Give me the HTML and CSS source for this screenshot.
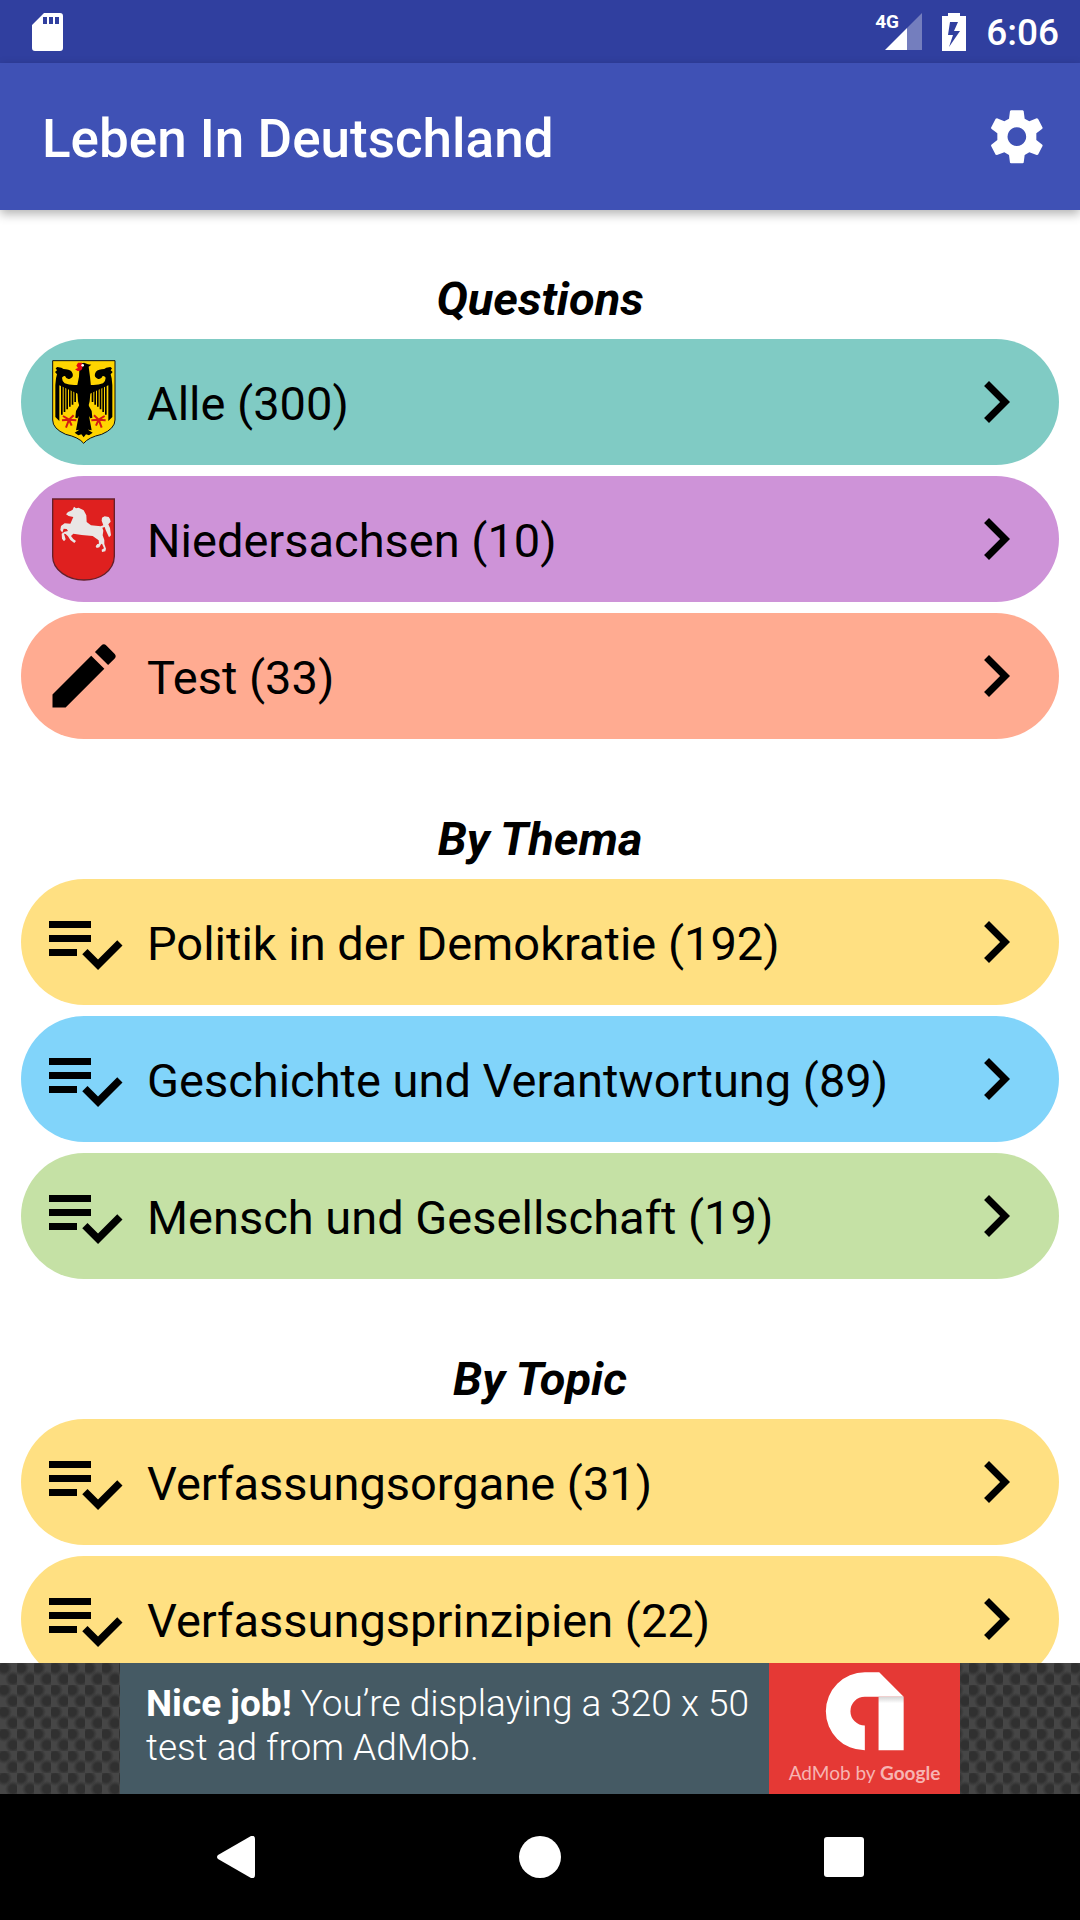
FILE: index.html
```html
<!DOCTYPE html>
<html lang="de">
<head>
<meta charset="utf-8">
<meta name="viewport" content="width=device-width, initial-scale=1">
<title>Leben In Deutschland</title>
<link rel="stylesheet" href="styles.css">
</head>
<body>
<svg class="sprite" aria-hidden="true">
  <symbol id="chevron" viewBox="0 0 24 24"><path d="M10 6 8.59 7.41 13.17 12l-4.58 4.59L10 18l6-6z"/></symbol>
  <symbol id="checklist" viewBox="0 0 24 24"><path d="M14 10H2v2h12v-2zm0-4H2v2h12V6zM2 16h8v-2H2v2zm19.5-4.5L23 13l-6.99 7-4.51-4.5L13 14l3.01 3 5.49-5.5z"/></symbol>
  <symbol id="pencil" viewBox="0 0 24 24"><path d="M3 17.25V21h3.75L17.81 9.94l-3.75-3.75L3 17.25zM20.71 7.04a1 1 0 0 0 0-1.41l-2.34-2.34a1 1 0 0 0-1.41 0l-1.83 1.83 3.75 3.75 1.83-1.83z"/></symbol>
</svg>
<div class="app">
  <div class="status">
    <svg class="status-sd" viewBox="0 0 31 38" role="img" aria-label="SD card"><path fill="#fff" fill-rule="evenodd" d="M12 0h16a3 3 0 0 1 3 3v32a3 3 0 0 1-3 3H3a3 3 0 0 1-3-3V12zM11 4v7h4V4zm6 0v7h4V4zm6 0v7h4V4z"/></svg>
    <div class="signal">
      <span class="signal-type">4G</span>
      <svg class="signal-bars" viewBox="0 0 37 37" aria-hidden="true"><path fill="#fff" fill-opacity=".33" d="M22 15 37 0v37H22z"/><path fill="#fff" d="M22 15v22H0z"/></svg>
    </div>
    <svg class="status-battery" viewBox="0 0 24 38" role="img" aria-label="Charging"><path fill="#fff" fill-rule="evenodd" d="M6 0h12v3h6v35H0V3h6zM8 9 6 22h5L7 34l11-16h-6l4-9z"/></svg>
    <span class="clock">6:06</span>
  </div>
  <header class="toolbar">
    <h1 class="toolbar-title">Leben In Deutschland</h1>
    <button class="settings" type="button" aria-label="Settings">
      <svg viewBox="434 311 189 189"><path fill="#fff" fill-rule="evenodd" d="M512 327h35l3 2 3 23 14 8 22-9 4 1 14 27-1 3-18 14v20l18 14 1 3-14 27-4 1-22-8-14 8-3 23-3 2h-35l-3-2-3-23-14-8-22 8-4-1-14-27 1-3 18-14v-20l-18-14-1-3 14-27 4-1 22 9 14-8 3-23zM529.500 378a28 28 0 1 0 .1 0z"/></svg>
    </button>
  </header>
  <main class="content">
    <section class="group">
      <h2 class="group-title">Questions</h2>
      <a class="row teal" href="#alle">
        <svg class="row-icon" viewBox="6 30 252 252" aria-hidden="true">
          <defs>
            <g id="eagle-wing">
              <path d="M120 104q-28 4-46-4-8-7-8-17 3-6 9-5 4 11 15 8 11-5 8-15-4-12-20-13-8 0-14-5l-12-2-5 4 4 6-6 5 6 7-3 12-2 20v96l12 12V106l70 32z"/>
              <path fill="none" stroke="#000" stroke-width="5" d="M65.500 104v90M73.500 104v82M81.500 106v72M89.500 108v62M97.500 110v54M105.500 112v44"/>
              <path d="m118 165-10 18-2 20 6 2 4-7-8 43 10-2 12-20 4-54z"/>
              <path fill="none" stroke="#d31b12" stroke-width="6" d="m66 211 21-2 22 2M87 209l-18-11M87 209l14-13M87 209l-9 24M87 209l8 18"/>
            </g>
          </defs>
          <path fill="#ffd500" stroke="#111" stroke-width="3" d="M38 32h187v178q0 26-40 43-40 9-54 27-14-18-54-27-39-17-39-43z"/>
          <use href="#eagle-wing"/>
          <use href="#eagle-wing" transform="matrix(-1 0 0 1 263 0)"/>
          <path d="M119 42 132 38l12 5 10 1-8 6 4 30 3 30-4 44-8 32 4 54 13 8-11 8-9-3-7 9-7-9-9 3-11-8 13-8 6-54-9-32-3-44 6-30z"/>
          <path fill="#e30613" d="M126 38h-12l-5 9 5 7-9 4 8 5q15 0 14-12z"/><circle cx="128" cy="46" r="4" fill="#fff"/>
        </svg>
        <span class="row-label">Alle (300)</span>
        <svg class="row-icon" aria-hidden="true"><use href="#chevron"/></svg>
      </a>
      <a class="row purple" href="#niedersachsen">
        <svg class="row-icon" viewBox="6 33 252 252" aria-hidden="true">
          <path fill="#df201f" stroke="#65202a" stroke-width="4" d="M38 39h185v172q-1 33-29 53-25 18-62 18t-65-20q-29-20-29-51z"/>
          <path fill="#e9e6e5" d="M98 71 102 62l6 5 8-2 15 8 8 15 1 20 13 10 29 3 8-3-5-14 1-9 8-4 12 2 4 6 2 8-7 8 5 11 3 22-6 6-10-22-3-9-7 2 3 9-2 14 5 14v12l5 14-2 8-10 2-1-7 7-4-6-14-3 2-5 9-8 2-3-5 5-7 5-1-1-10-18-13-33-3-25-4-7 7 7 9 8 6-5 6-12-9-7-11-7-7-5-1 5 17-5 6-6-8-1-15 9-6 10-2-4-6-9-1-4 12-6-8 2-12 11-8 17 1 9-20-14-3-8-5 6-7 9-4z"/>
        </svg>
        <span class="row-label">Niedersachsen (10)</span>
        <svg class="row-icon" aria-hidden="true"><use href="#chevron"/></svg>
      </a>
      <a class="row coral" href="#test">
        <svg class="row-icon" aria-hidden="true"><use href="#pencil"/></svg>
        <span class="row-label">Test (33)</span>
        <svg class="row-icon" aria-hidden="true"><use href="#chevron"/></svg>
      </a>
    </section>
    <section class="group">
      <h2 class="group-title">By Thema</h2>
      <a class="row yellow" href="#politik">
        <svg class="row-icon" aria-hidden="true"><use href="#checklist"/></svg>
        <span class="row-label">Politik in der Demokratie (192)</span>
        <svg class="row-icon" aria-hidden="true"><use href="#chevron"/></svg>
      </a>
      <a class="row blue" href="#geschichte">
        <svg class="row-icon" aria-hidden="true"><use href="#checklist"/></svg>
        <span class="row-label">Geschichte und Verantwortung (89)</span>
        <svg class="row-icon" aria-hidden="true"><use href="#chevron"/></svg>
      </a>
      <a class="row green" href="#mensch">
        <svg class="row-icon" aria-hidden="true"><use href="#checklist"/></svg>
        <span class="row-label">Mensch und Gesellschaft (19)</span>
        <svg class="row-icon" aria-hidden="true"><use href="#chevron"/></svg>
      </a>
    </section>
    <section class="group">
      <h2 class="group-title">By Topic</h2>
      <a class="row yellow" href="#verfassungsorgane">
        <svg class="row-icon" aria-hidden="true"><use href="#checklist"/></svg>
        <span class="row-label">Verfassungsorgane (31)</span>
        <svg class="row-icon" aria-hidden="true"><use href="#chevron"/></svg>
      </a>
      <a class="row yellow" href="#verfassungsprinzipien">
        <svg class="row-icon" aria-hidden="true"><use href="#checklist"/></svg>
        <span class="row-label">Verfassungsprinzipien (22)</span>
        <svg class="row-icon" aria-hidden="true"><use href="#chevron"/></svg>
      </a>
    </section>
  </main>
  <aside class="ad">
    <a class="ad-banner" href="#ad">
      <span class="ad-text">
        <span class="ad-line"><b>Nice job!</b> You’re displaying a 320 x 50</span>
        <span class="ad-line">test ad from AdMob.</span>
      </span>
      <span class="ad-brand">
        <svg class="ad-logo" viewBox="256 97 236 236" aria-hidden="true"><defs><linearGradient id="fold" x2="0" y2="1"><stop stop-color="#d5d5d5"/><stop offset=".12" stop-color="#fff"/></linearGradient></defs><path fill="#fff" d="M491 171 418 98h-43a116 116 0 0 0 0 233v-74a43 43 0 0 1 0-86z"/><path fill="url(#fold)" d="M416 171h75v160h-75z"/></svg>
        <span class="ad-by">AdMob by <b>Google</b></span>
      </span>
    </a>
  </aside>
  <nav class="navbar" aria-label="System">
    <button class="nav-button" type="button" aria-label="Back"><svg class="nav-icon" viewBox="0 0 42 42"><path d="M36 0q4-1 4 3v36q0 4-4 3L3 23q-2-2 0-4z"/></svg></button>
    <button class="nav-button" type="button" aria-label="Home"><svg class="nav-icon" viewBox="0 0 42 42"><circle cx="21" cy="21" r="21"/></svg></button>
    <button class="nav-button" type="button" aria-label="Recent apps"><svg class="nav-icon" viewBox="0 0 42 42"><rect x="1" y="1" width="40" height="40" rx="3"/></svg></button>
  </nav>
</div>
</body>
</html>
```
FILE: styles.css
```css
* { box-sizing: border-box; }

body {
  margin: 0;
  background: #fff;
  color: #000;
  font-family: Roboto, "Liberation Sans", sans-serif;
}

button {
  border: 0;
  padding: 0;
  background: none;
}

a {
  color: inherit;
  text-decoration: none;
}

svg {
  display: block;
  flex: none;
}

.sprite {
  position: absolute;
  width: 0;
  height: 0;
}

.app {
  display: flex;
  flex-direction: column;
  height: 100vh;
}

/* Status bar */
.status {
  display: flex;
  flex: none;
  align-items: center;
  gap: 20px;
  height: 63px;
  padding: 0 21px 0 32px;
  background: #303f9f;
  color: #fff;
}

.status-sd {
  width: 31px;
  height: 38px;
  margin-right: auto;
}

.signal {
  position: relative;
  padding-left: 10px;
}

.signal-type {
  position: absolute;
  top: 1px;
  left: 0;
  font-size: 19px;
  font-weight: 700;
  line-height: 16px;
}

.signal-bars {
  width: 37px;
  height: 37px;
}

.status-battery {
  width: 24px;
  height: 38px;
}

.clock {
  padding-top: 2px;
  font-size: 37px;
  font-weight: 500;
  line-height: 44px;
}

/* Toolbar */
.toolbar {
  position: relative;
  display: flex;
  flex: none;
  align-items: center;
  justify-content: space-between;
  height: 147px;
  padding: 0 32px 0 42px;
  background: #3f51b5;
  box-shadow: 0 4px 10px rgba(0, 0, 0, 0.3);
  color: #fff;
}

.toolbar-title {
  margin: 0;
  padding-top: 4px;
  font-size: 53px;
  font-weight: 500;
  line-height: 62px;
}

.settings svg {
  width: 63px;
  height: 63px;
}

/* Question lists */
.content {
  display: flex;
  flex: 1;
  flex-direction: column;
  gap: 52px;
  min-height: 0;
  padding: 41px 21px 0;
  overflow-y: auto;
  scrollbar-width: none;
}

.group {
  display: flex;
  flex: none;
  flex-direction: column;
  gap: 11px;
}

.group-title {
  margin: 20px 0 1px;
  font-size: 47px;
  font-style: italic;
  font-weight: 700;
  line-height: 56px;
  text-align: center;
}

.row {
  display: flex;
  align-items: center;
  gap: 21px;
  height: 126px;
  padding: 0 21px;
  border-radius: 63px;
}

.row-icon {
  width: 84px;
  height: 84px;
}

.row-label {
  flex: 1;
  padding-top: 4px;
  font-size: 47px;
  line-height: 56px;
}

.teal { background: #80cbc4; }
.purple { background: #ce93d8; }
.coral { background: #ffab91; }
.yellow { background: #ffe082; }
.blue { background: #81d4fa; }
.green { background: #c5e1a5; }

/* Ad banner */
.ad {
  display: flex;
  flex: none;
  justify-content: center;
  background-color: #464646;
  background-image:
    radial-gradient(circle at 4px 5px, #303030 4px, transparent 8px),
    radial-gradient(circle at 13px 16px, #303030 4px, transparent 8px);
  background-size: 17px 22px;
}

.ad-banner {
  display: flex;
  width: 840px;
  height: 131px;
  background: #455a64;
  color: #fff;
}

.ad-text {
  flex: 1;
  padding: 19px 0 0 26px;
  font-size: 37px;
  font-weight: 300;
  line-height: 44px;
}

.ad-line { display: block; }

.ad-text b { font-weight: 700; }

.ad-brand {
  display: flex;
  flex-direction: column;
  align-items: center;
  gap: 10px;
  width: 191px;
  padding-top: 9px;
  background: #e53935;
}

.ad-logo {
  width: 79px;
  height: 79px;
}

.ad-by {
  color: #f7b4b2;
  font-family: Lato, sans-serif;
  font-size: 19px;
  line-height: 24px;
}

/* System navigation */
.navbar {
  display: flex;
  flex: none;
  justify-content: center;
  background: #000;
}

.nav-button {
  display: flex;
  flex: 0 1 304px;
  align-items: center;
  justify-content: center;
  height: 126px;
}

.nav-icon {
  width: 42px;
  height: 42px;
  fill: #fff;
}
```
